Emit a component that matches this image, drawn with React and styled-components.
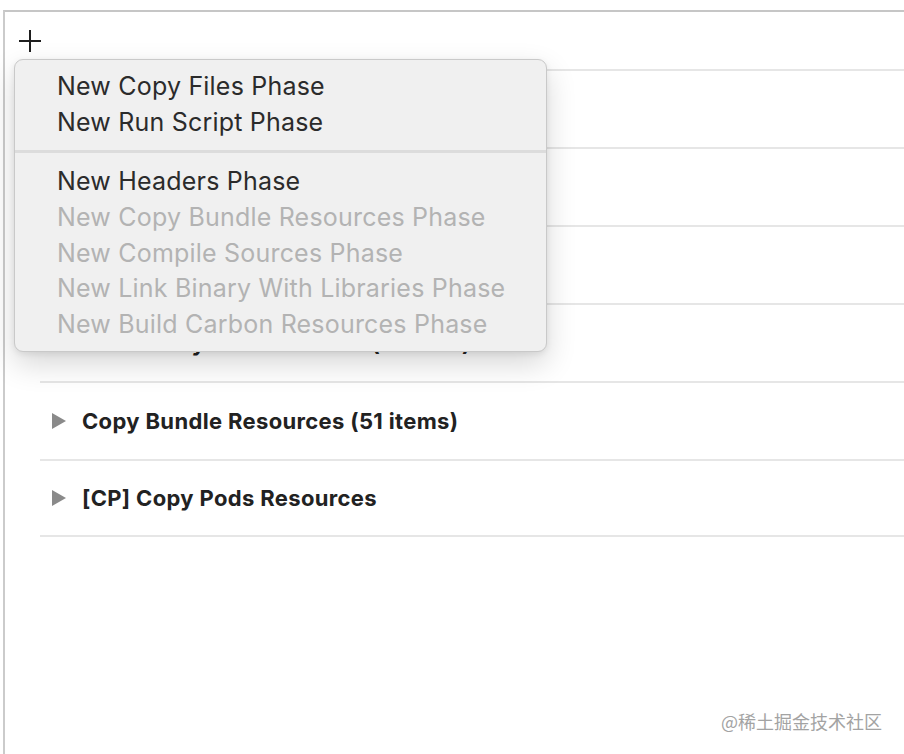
import React from "react";
import styled, { createGlobalStyle } from "styled-components";

const Global = createGlobalStyle`
  html, body { margin: 0; padding: 0; background: #ffffff; }
  body { font-family: "Inter", "Liberation Sans", sans-serif; }
`;

const Page = styled.div`
  position: relative;
  width: 904px;
  height: 754px;
  overflow: hidden;
  background: #fff;
  padding-top: 10px;
  box-sizing: border-box;
`;

const Panel = styled.div`
  margin-left: 3px;
  height: 744px;
  box-sizing: border-box;
  border-top: 2px solid #c6c6c6;
  border-left: 2px solid #cbcbcb;
  display: flex;
  flex-direction: column;
`;

const Toolbar = styled.div`
  height: 57px;
  display: flex;
  align-items: flex-start;
  padding: 17px 0 0 13px;
  box-sizing: border-box;
`;

const PlusButton = styled.button`
  border: 0;
  background: none;
  padding: 0;
  width: 24px;
  height: 24px;
  display: flex;
  color: #1e1e1e;
`;

const List = styled.div`
  margin-left: 35px;
  display: flex;
  flex-direction: column;
`;

const Row = styled.div`
  height: 78px;
  box-sizing: border-box;
  border-top: 2px solid #e6e6e6;
  display: flex;
  align-items: center;
  padding-left: 12px;
  gap: 16px;
  &:last-child { border-bottom: 2px solid #e6e6e6; }
`;

const Disclosure = styled.span`
  width: 0;
  height: 0;
  border-top: 8px solid transparent;
  border-bottom: 8px solid transparent;
  border-left: 14px solid #8a8a8a;
`;

const RowTitle = styled.span`
  font-size: 22px;
  font-weight: 700;
  color: #222222;
  letter-spacing: 0.35px;
`;

const Menu = styled.div`
  position: absolute;
  left: 14px;
  top: 59px;
  width: 533px;
  height: 293px;
  box-sizing: border-box;
  background: #f0f0f0;
  border: 1px solid #c9c9c9;
  border-radius: 9px;
  box-shadow: 0 12px 30px rgba(0, 0, 0, 0.16), 0 2px 6px rgba(0, 0, 0, 0.08);
  padding: 8px 0 9px;
  display: flex;
  flex-direction: column;
`;

const MenuItem = styled.div`
  height: 36px;
  display: flex;
  align-items: center;
  padding-left: 42px;
  font-size: 25px;
  letter-spacing: 0.2px;
  color: ${(p) => (p.disabled ? "#b3b3b3" : "#2b2b2b")};
`;

const MenuSeparator = styled.div`
  height: 24px;
  display: flex;
  align-items: center;
  &::before {
    content: "";
    display: block;
    width: 100%;
    height: 3px;
    background: #dcdcdc;
  }
`;

const Watermark = styled.div`
  position: absolute;
  right: 22px;
  bottom: 20px;
  font-family: "Noto Sans CJK SC", "Noto Sans", sans-serif;
  font-size: 18px;
  color: #a3a3a3;
`;

const rows = [
  "Dependencies (0 items)",
  "[CP] Check Pods Manifest.lock",
  "Compile Sources (86 items)",
  "Link Binary With Libraries (4 items)",
  "Copy Bundle Resources (51 items)",
  "[CP] Copy Pods Resources",
];

const groupA = ["New Copy Files Phase", "New Run Script Phase"];
const groupB = [
  { label: "New Headers Phase" },
  { label: "New Copy Bundle Resources Phase", disabled: true },
  { label: "New Compile Sources Phase", disabled: true },
  { label: "New Link Binary With Libraries Phase", disabled: true },
  { label: "New Build Carbon Resources Phase", disabled: true },
];

export default function App() {
  return (
    <Page>
      <Global />
      <Panel>
        <Toolbar>
          <PlusButton aria-label="Add">
            <svg width="24" height="24" viewBox="0 0 24 24">
              <path d="M12 1v22M1 12h22" stroke="currentColor" strokeWidth="2" fill="none" />
            </svg>
          </PlusButton>
        </Toolbar>
        <List>
          {rows.map((r) => (
            <Row key={r}>
              <Disclosure />
              <RowTitle>{r}</RowTitle>
            </Row>
          ))}
        </List>
      </Panel>
      <Menu>
        {groupA.map((l) => (
          <MenuItem key={l}>{l}</MenuItem>
        ))}
        <MenuSeparator />
        {groupB.map((i) => (
          <MenuItem key={i.label} disabled={i.disabled}>
            {i.label}
          </MenuItem>
        ))}
      </Menu>
      <Watermark>@稀土掘金技术社区</Watermark>
    </Page>
  );
}
